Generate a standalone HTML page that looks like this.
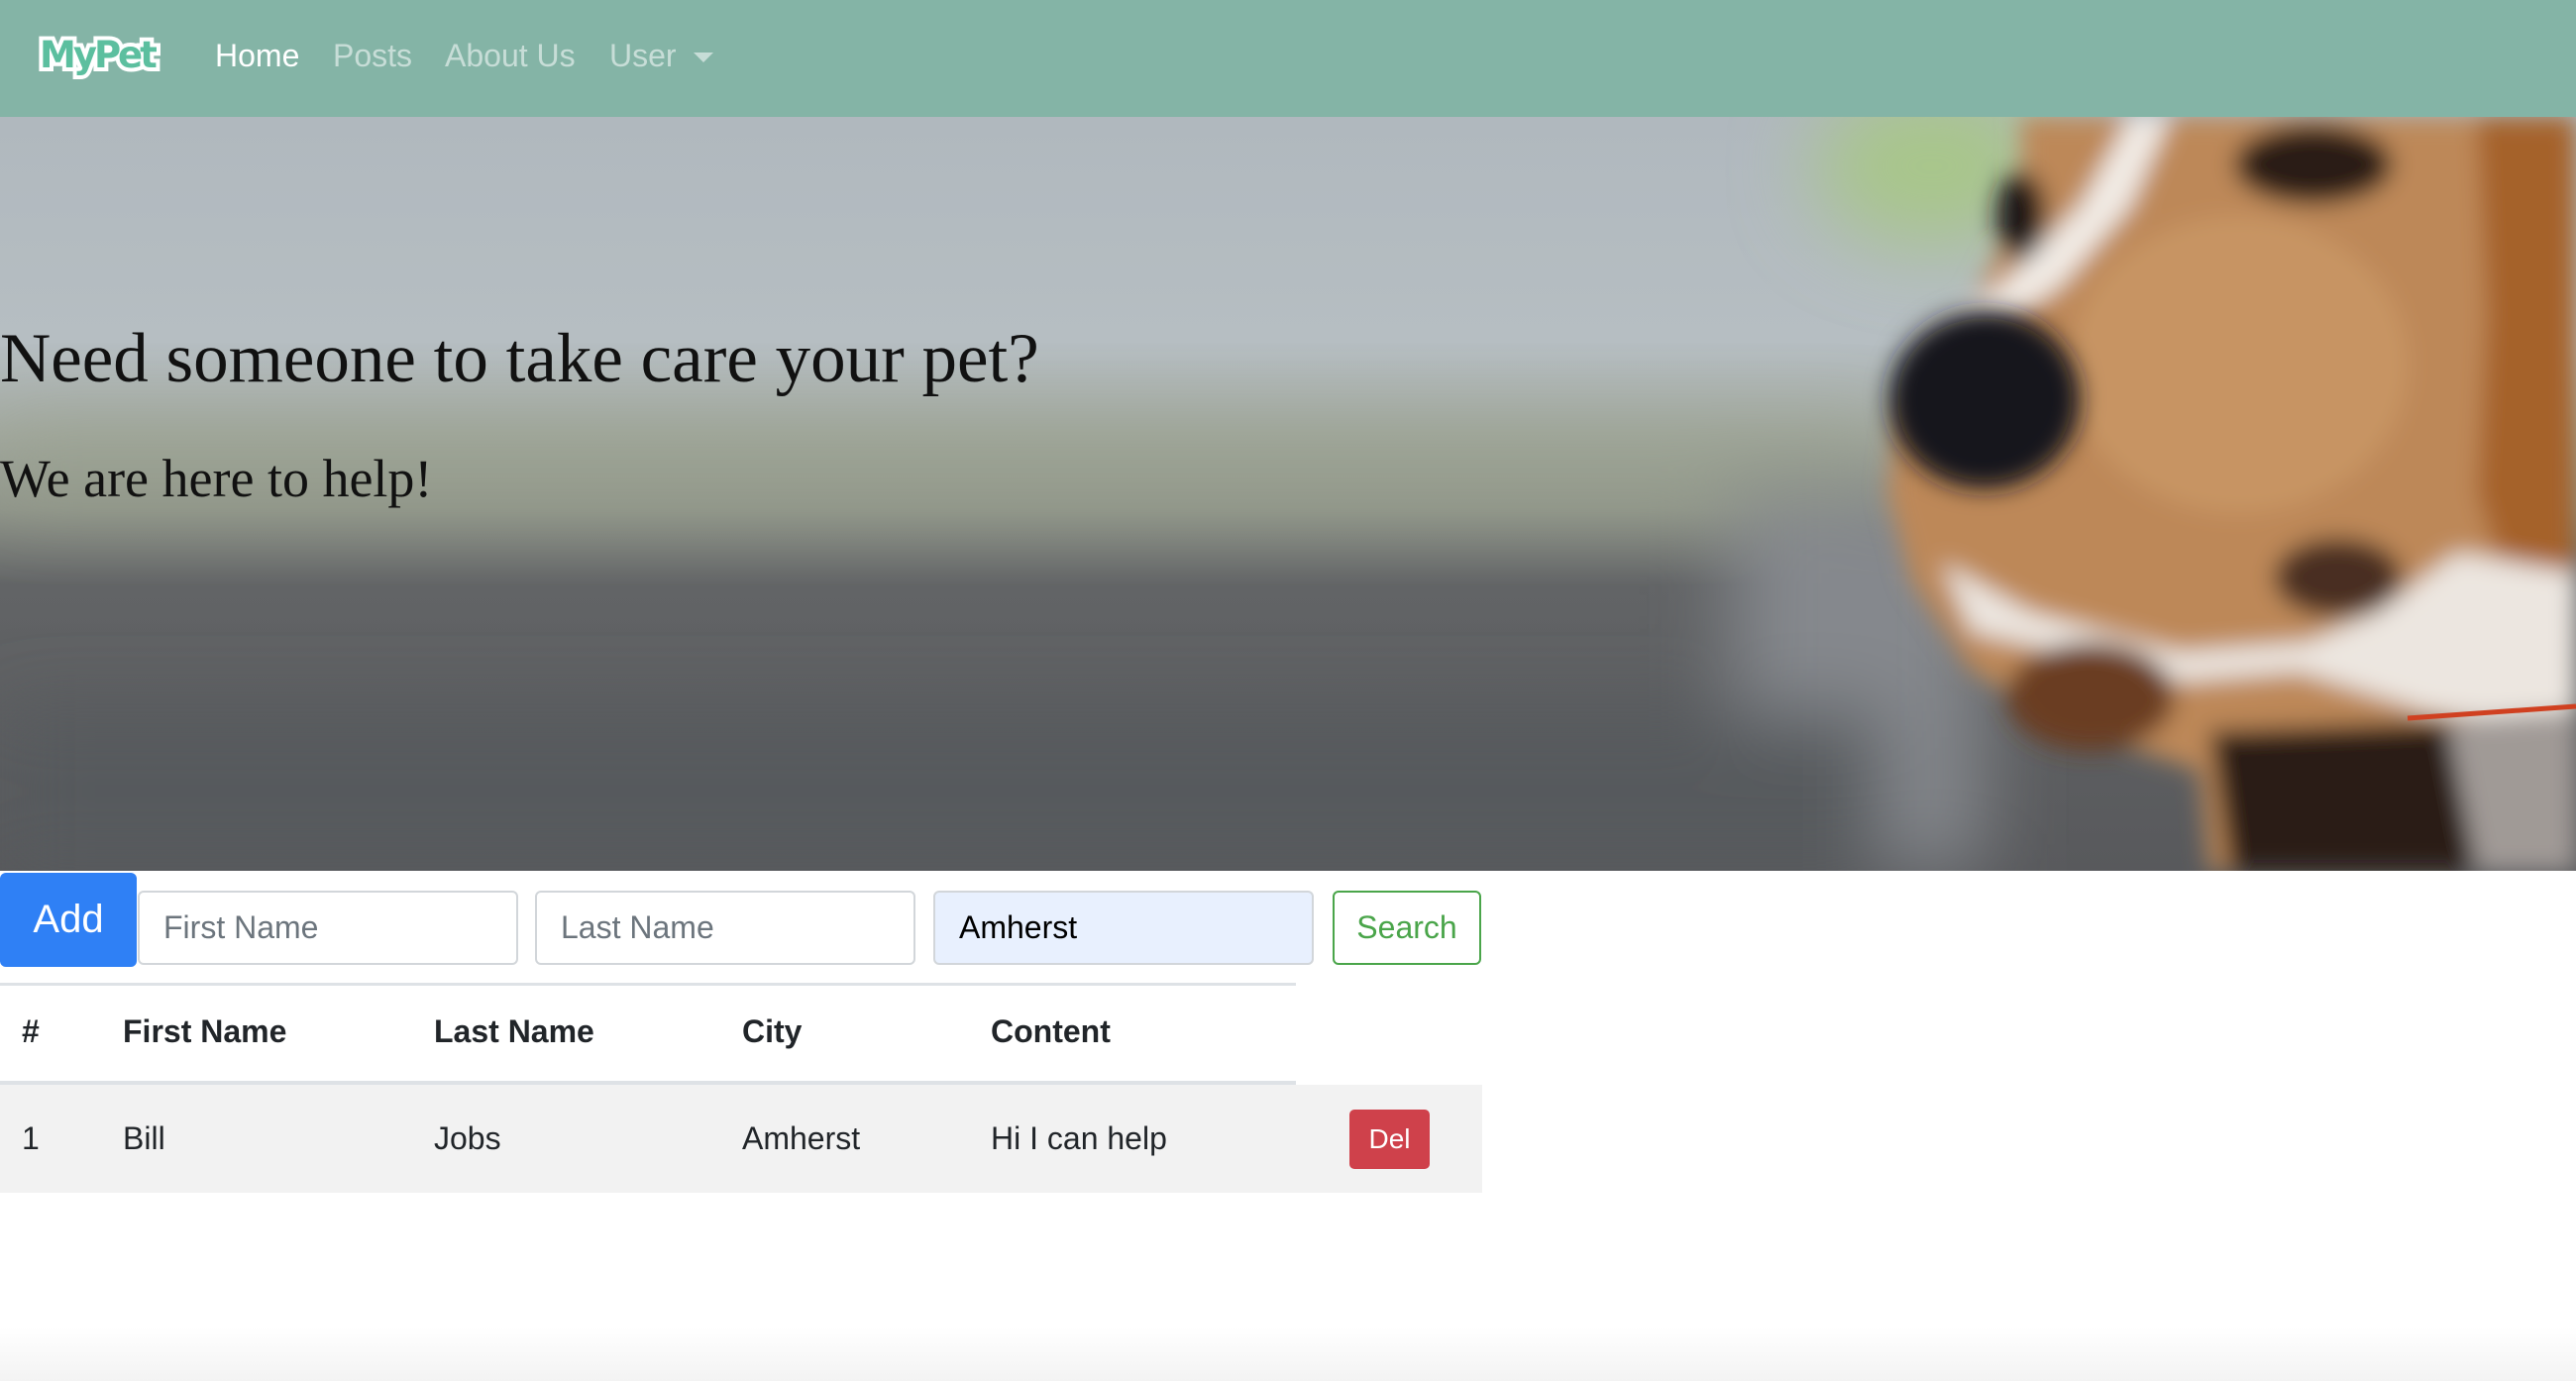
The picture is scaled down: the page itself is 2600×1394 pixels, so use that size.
<!DOCTYPE html>
<html><head><meta charset="utf-8"><style>
*{margin:0;padding:0;box-sizing:border-box}
body{width:2600px;height:1394px;background:#fff;font-family:"Liberation Sans",sans-serif;position:relative;overflow:hidden}
.nav{position:absolute;left:0;top:0;width:2600px;height:118px;background:#84b4a6}
.logo{position:absolute;left:40px;top:34px;font:bold 37px "DejaVu Sans",sans-serif;color:#5cbf9f;-webkit-text-stroke:8px #fff;paint-order:stroke fill;letter-spacing:-3px}
.nl{position:absolute;top:38px;font-size:32px;color:rgba(255,255,255,.55)}
.hero{position:absolute;left:0;top:118px;width:2600px;height:761px;overflow:hidden}
.h1{position:absolute;left:0;top:204px;font:71px "Liberation Serif",serif;color:#111}
.h2{position:absolute;left:0;top:334px;font:54px "Liberation Serif",serif;color:#111}
.add{position:absolute;left:0;top:881px;width:138px;height:95px;background:#2f80f5;border-radius:6px;color:#fff;font-size:40px;text-align:center;line-height:95px}
.inp{position:absolute;top:899px;height:75px;width:384px;border:2px solid #d2d6da;border-radius:6px;font-size:32px;color:#6c757d;padding-left:24px;line-height:71px}
.srch{position:absolute;left:1345px;top:899px;width:150px;height:75px;border:2px solid #4aa54a;border-radius:6px;color:#4aa54a;font-size:32px;text-align:center;line-height:71px}
.t{position:absolute;font-size:32px;color:#212529}
.b{font-weight:bold}
</style></head><body>
<div class="nav">
<div class="logo">MyPet</div>
<div class="nl" style="left:217px;color:#fff">Home</div>
<div class="nl" style="left:336px">Posts</div>
<div class="nl" style="left:449px">About Us</div>
<div class="nl" style="left:615px">User</div>
<div style="position:absolute;left:700px;top:53px;border-left:10px solid transparent;border-right:10px solid transparent;border-top:10px solid rgba(255,255,255,.55)"></div>
</div>
<div class="hero">
<svg width="2600" height="761" viewBox="0 0 2600 761">
<defs>
<linearGradient id="bg" x1="0" y1="0" x2="0" y2="1">
<stop offset="0" stop-color="#b0b8be"/><stop offset=".3" stop-color="#b6bec2"/>
<stop offset=".42" stop-color="#a2a89f"/><stop offset=".52" stop-color="#8f948a"/>
<stop offset=".62" stop-color="#626466"/><stop offset="1" stop-color="#58595c"/>
</linearGradient>
<filter id="bl" x="-20%" y="-20%" width="140%" height="140%"><feGaussianBlur stdDeviation="40"/></filter>
<filter id="s" x="-20%" y="-20%" width="140%" height="140%"><feGaussianBlur stdDeviation="12"/></filter>
</defs>
<rect width="2600" height="761" fill="url(#bg)"/>
<g filter="url(#bl)">
<rect x="0" y="320" width="1900" height="70" fill="#98a08a" opacity=".6"/>
<rect x="1750" y="380" width="250" height="381" fill="#85888d"/>
<ellipse cx="1950" cy="50" rx="120" ry="80" fill="#a8c68a"/>
<rect x="0" y="600" width="1900" height="161" fill="#575a5d"/>
</g>
<g filter="url(#s)">
<path d="M2040 0 L2600 0 L2600 761 L2230 761 L2220 660 L2100 620 L1990 560 L1930 470 L1905 380 L1915 300 L1990 190 L2040 90 Z" fill="#bd8858"/>
<path d="M2150 0 L2100 90 L2020 170 L1940 220 L1930 260 L2010 215 L2080 170 L2150 90 L2190 0 Z" fill="#f2ece6"/>
<ellipse cx="2260" cy="250" rx="170" ry="150" fill="#c79464"/>
<path d="M2500 0 L2600 0 L2600 540 L2540 500 L2500 380 L2510 200 Z" fill="#a5622c"/>
<ellipse cx="2335" cy="48" rx="80" ry="40" fill="#2a1a14"/>
<ellipse cx="2040" cy="100" rx="25" ry="45" fill="#1e1612"/>
<path d="M1960 450 L2050 500 L2200 540 L2330 530 L2400 500 L2480 440 L2600 460 L2600 620 L2450 600 L2320 560 L2200 570 L2080 540 L1990 520 Z" fill="#ece6e0"/>
<ellipse cx="2360" cy="465" rx="65" ry="40" fill="#4a2e22"/>
<ellipse cx="2110" cy="585" rx="85" ry="55" fill="#6a3d22"/>
<path d="M2230 620 L2470 610 L2600 640 L2600 761 L2250 761 Z" fill="#2a1d16"/>
<path d="M2470 610 L2600 600 L2600 761 L2500 761 Z" fill="#a09a96"/>
</g>
<ellipse cx="2003" cy="285" rx="96" ry="90" fill="#17161b" filter="url(#s)"/>
<path d="M2430 607 L2600 595" stroke="#d04020" stroke-width="5"/>
</svg>
<div class="h1">Need someone to take care your pet?</div>
<div class="h2">We are here to help!</div>
</div>
<div class="add">Add</div>
<div class="inp" style="left:139px">First Name</div>
<div class="inp" style="left:540px">Last Name</div>
<div class="inp" style="left:942px;background:#e8f0fe;color:#000">Amherst</div>
<div class="srch">Search</div>
<div style="position:absolute;left:0;top:992px;width:1308px;height:3px;background:#dee2e6"></div>
<div class="t b" style="left:22px;top:1023px">#</div>
<div class="t b" style="left:124px;top:1023px">First Name</div>
<div class="t b" style="left:438px;top:1023px">Last Name</div>
<div class="t b" style="left:749px;top:1023px">City</div>
<div class="t b" style="left:1000px;top:1023px">Content</div>
<div style="position:absolute;left:0;top:1091px;width:1308px;height:4px;background:#dee2e6"></div>
<div style="position:absolute;left:0;top:1095px;width:1496px;height:109px;background:#f2f2f2"></div>
<div class="t" style="left:22px;top:1131px">1</div>
<div class="t" style="left:124px;top:1131px">Bill</div>
<div class="t" style="left:438px;top:1131px">Jobs</div>
<div class="t" style="left:749px;top:1131px">Amherst</div>
<div class="t" style="left:1000px;top:1131px">Hi I can help</div>
<div style="position:absolute;left:1362px;top:1120px;width:81px;height:60px;background:#cf414b;border-radius:5px;color:#fff;font-size:28px;text-align:center;line-height:60px">Del</div>
<div style="position:absolute;left:0;top:1340px;width:2600px;height:54px;background:linear-gradient(#fff,#f3f3f3)"></div>
</body></html>
